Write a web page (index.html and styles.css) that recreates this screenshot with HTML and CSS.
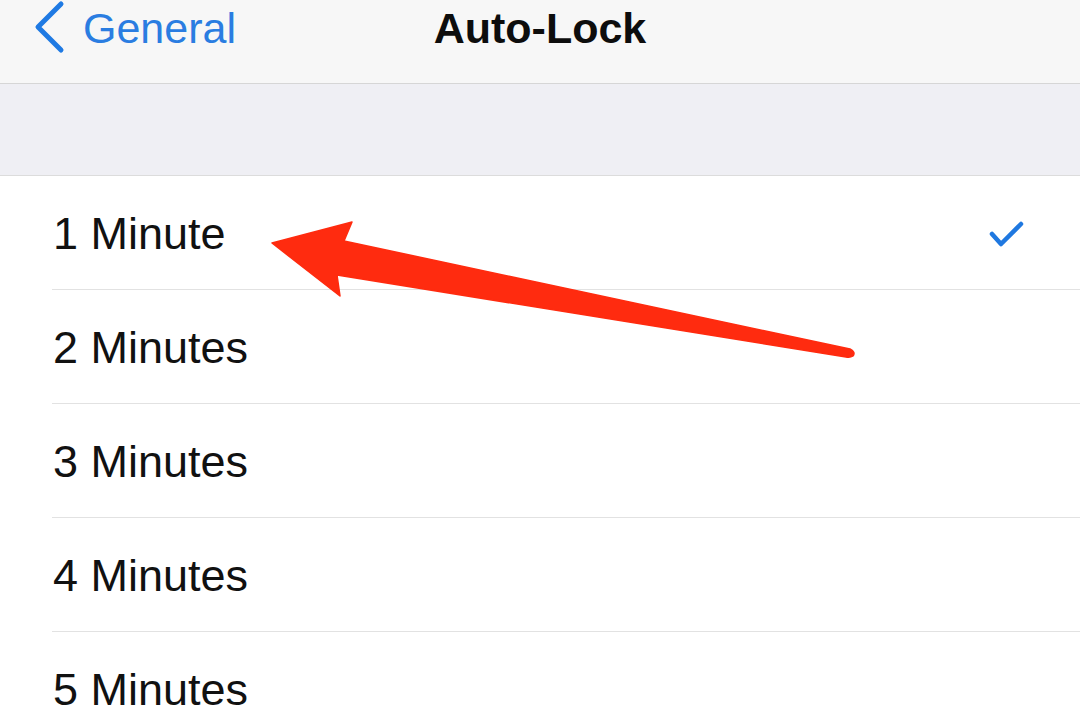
FILE: index.html
```html
<!DOCTYPE html>
<html>
<head>
<meta charset="utf-8">
<link rel="stylesheet" href="styles.css">
</head>
<body>
<div class="screen">
  <header class="nav">
    <div class="back">
      <svg class="chevron" width="34" height="54" viewBox="0 0 34 54">
        <path d="M28 4 L5 27 L28 50" fill="none" stroke="#1f7ae3" stroke-width="5" stroke-linecap="round" stroke-linejoin="round"/>
      </svg>
      <span class="back-label">General</span>
    </div>
    <div class="title">Auto-Lock</div>
    <div class="spacer"></div>
  </header>
  <div class="section-gap"></div>
  <ul class="list">
    <li class="row"><div class="row-inner"><span class="label">1 Minute</span>
      <svg class="check" width="40" height="32" viewBox="0 0 40 32"><path d="M6 16 L15 26 L35 6" fill="none" stroke="#1f78e0" stroke-width="4.5" stroke-linecap="round" stroke-linejoin="round"/></svg>
    </div></li>
    <li class="row"><div class="row-inner"><span class="label">2 Minutes</span></div></li>
    <li class="row"><div class="row-inner"><span class="label">3 Minutes</span></div></li>
    <li class="row"><div class="row-inner"><span class="label">4 Minutes</span></div></li>
    <li class="row"><div class="row-inner"><span class="label">5 Minutes</span></div></li>
  </ul>
  <svg class="annotation" width="1080" height="720" viewBox="0 0 1080 720">
    <path d="M272 243 L352 222 L344 241 L850 349 Q856 352 853 356 Q850 358 846 357 L337 275 L340 296 Z" fill="#ff2b0f" stroke="#ff2b0f" stroke-width="1.5" stroke-linejoin="round"/>
  </svg>
</div>
</body>
</html>
```

FILE: styles.css
```css
* { box-sizing: border-box; }
html, body { margin: 0; padding: 0; }
body {
  background: #ffffff;
  font-family: "Liberation Sans", Arial, Helvetica, sans-serif;
  color: #111111;
}
.screen {
  position: relative;
  width: 1080px;
  height: 720px;
  overflow: hidden;
  background: #ffffff;
}
.nav {
  height: 84px;
  background: #f7f7f7;
  border-bottom: 1px solid #d6d6d6;
  display: grid;
  grid-template-columns: 1fr auto 1fr;
  align-items: start;
}
.back {
  display: flex;
  align-items: flex-start;
  padding-left: 33px;
}
.chevron { display: block; margin-top: 0px; }
.back-label {
  margin-left: 16px;
  padding-top: 4px;
  font-size: 43px;
  color: #2a7de1;
}
.title {
  padding-top: 4px;
  font-size: 43px;
  font-weight: bold;
  color: #0d0d0d;
}
.section-gap {
  height: 92px;
  background: #efeff4;
  border-bottom: 1px solid #dcdcdc;
}
.list {
  list-style: none;
  margin: 0;
  padding: 0;
}
.row {
  padding-left: 52px;
}
.row-inner {
  height: 114px;
  border-bottom: 1px solid #e2e2e2;
  display: flex;
  align-items: center;
  padding-left: 1px;
  padding-top: 2px;
}
.label {
  font-size: 45px;
  color: #111111;
}
.check {
  display: block;
  margin-left: auto;
  margin-right: 54px;
}
.annotation {
  position: absolute;
  left: 0;
  top: 0;
  pointer-events: none;
}
```
